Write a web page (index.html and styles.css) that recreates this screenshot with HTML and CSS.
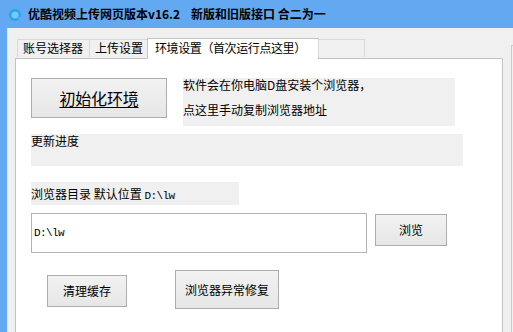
FILE: index.html
```html
<!DOCTYPE html>
<html>
<head>
<meta charset="utf-8">
<link rel="stylesheet" href="styles.css">
</head>
<body>
<div class="window">
  <div class="titlebar">
    <svg class="icon" width="14" height="14" viewBox="0 0 14 14">
      <circle cx="7" cy="7" r="6" fill="#1fa8e8"/>
      <circle cx="7" cy="7" r="3.6" fill="#7cc6f6"/>
      <path d="M8.5 9.5 L12 12.5 L13 9 Z" fill="#63a9f1"/>
    </svg>
    <span class="title">优酷视频上传网页版本v16.2&nbsp;&nbsp;&nbsp; 新版和旧版接口 合二为一</span>
  </div>
  <div class="client">
    <div class="tabctl">
      <div class="tabs">
        <div class="tab">账号选择器</div>
        <div class="tab">上传设置</div>
        <div class="tab active">环境设置（首次运行点这里）</div>
        <div class="tab empty"></div>
      </div>
      <div class="panel">
        <div class="row r1">
          <button class="btn init">初始化环境</button>
          <div class="info">
            <div class="line">软件会在你电脑D盘安装个浏览器，</div>
            <div class="line second">点这里手动复制浏览器地址</div>
          </div>
        </div>
        <div class="progress">更新进度</div>
        <div class="dirlabel">浏览器目录 默认位置 <span class="mono">D:\lw</span></div>
        <div class="row r4">
          <div class="input"><span class="mono">D:\lw</span></div>
          <button class="btn browse">浏览</button>
        </div>
        <div class="row r5">
          <button class="btn clear">清理缓存</button>
          <button class="btn repair">浏览器异常修复</button>
        </div>
      </div>
    </div>
    <div class="side"></div>
  </div>
</div>
</body>
</html>
```
FILE: styles.css
```css
* { box-sizing: border-box; }
html, body { margin: 0; padding: 0; }
body {
  width: 513px;
  height: 332px;
  overflow: hidden;
  font-family: "Noto Sans CJK SC", "Noto Sans", sans-serif;
  font-size: 12px;
  color: #000;
}
.window {
  width: 513px;
  height: 332px;
  background: #63a9f1;
  display: flex;
  flex-direction: column;
}
.titlebar {
  height: 28px;
  display: flex;
  align-items: center;
  padding-left: 8px;
  flex: none;
}
.icon { margin-right: 6px; margin-top: 2px; }
.title {
  font-weight: bold;
  font-size: 12px;
  line-height: 14px;
  white-space: pre;
}
.client {
  margin-left: 7px;
  flex: 1;
  background: #f0f0f0;
  display: flex;
  padding-top: 9px;
  border-left: 1px solid #e4e4e4;
}
.tabctl {
  margin-left: 7px;
  width: 488px;
  display: flex;
  flex-direction: column;
}
.tabs {
  display: flex;
  align-items: flex-end;
  padding-left: 2px;
  height: 21px;
  position: relative;
  z-index: 1;
}
.tab {
  height: 18px;
  border: 1px solid #d9d9d9;
  border-bottom: none;
  background: #f0f0f0;
  padding: 0 5px;
  line-height: 16px;
  white-space: nowrap;
  margin-bottom: 1px;
}
.tab + .tab { margin-left: -1px; }
.tab:nth-child(1) { width: 73px; }
.tab:nth-child(2) { width: 59px; }
.tab.active {
  width: 172px;
  height: 21px;
  background: #fff;
  border-color: #c4c4c4;
  padding-left: 7px;
  line-height: 18px;
  margin-bottom: -1px;
  letter-spacing: -0.4px;
}
.tab.empty { width: 47px; }
.panel {
  flex: 1;
  background: #fff;
  border: 1px solid #c4c4c4;
  border-bottom: none;
  padding-left: 15px;
  padding-top: 19px;
}
.row { display: flex; align-items: flex-start; }
.btn {
  font-family: "Noto Sans CJK SC", "Noto Sans", sans-serif;
  font-size: 12px;
  color: #000;
  border: 1px solid #adadad;
  background: linear-gradient(#f2f2f2, #e6e6e6);
  padding: 0;
  margin: 0;
  line-height: 14px;
}
.init {
  width: 136px;
  height: 40px;
  font-size: 16px;
  line-height: 20px;
  text-decoration: underline;
  text-underline-offset: 2px;
  letter-spacing: -0.2px;
}
.info {
  margin-left: 16px;
  width: 272px;
  height: 48px;
  background: #f0f0f0;
}
.line { line-height: 14px; white-space: nowrap; }
.line.second { margin-top: 11px; }
.progress {
  margin-top: 8px;
  width: 432px;
  height: 32px;
  background: #f0f0f0;
  line-height: 14px;
}
.dirlabel {
  margin-top: 16px;
  width: 208px;
  height: 23px;
  background: #f0f0f0;
  line-height: 23px;
  white-space: nowrap;
}
.mono {
  font-family: "Liberation Mono", "DejaVu Sans Mono", monospace;
  font-size: 11px;
  letter-spacing: -0.6px;
}
.r4 { margin-top: 8px; }
.input {
  width: 336px;
  height: 40px;
  border: 1px solid #b4b4b4;
  background: #fff;
  display: flex;
  align-items: center;
  padding-left: 2px;
}
.browse {
  margin-left: 8px;
  margin-top: 1px;
  width: 72px;
  height: 32px;
}
.r5 { margin-top: 17px; }
.clear {
  margin-left: 16px;
  margin-top: 5px;
  width: 80px;
  height: 32px;
}
.repair {
  margin-left: 48px;
  width: 104px;
  height: 39px;
}
.side {
  margin-left: 8px;
  margin-top: 8px;
  flex: 1;
  border-left: 1px solid #c8c8c8;
  border-top: 1px solid #c8c8c8;
  background: #f0f0f0;
}
```
